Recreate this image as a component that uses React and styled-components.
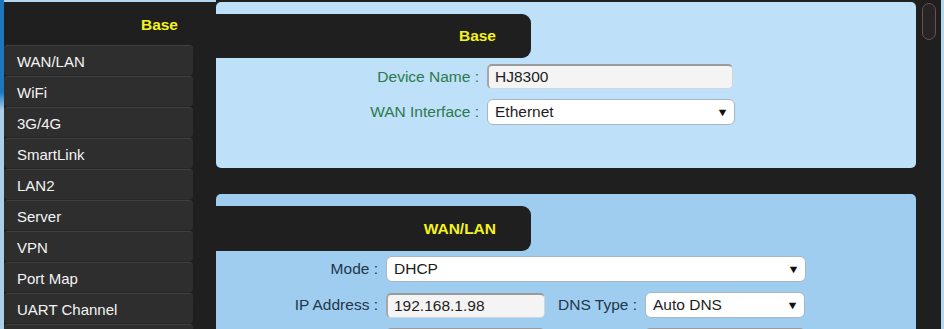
import React from "react";
import styled, { createGlobalStyle } from "styled-components";

const Global = createGlobalStyle`
  html, body { margin: 0; padding: 0; background: #1f1f1f; overflow: hidden; }
  body { font-family: "Liberation Sans", Arial, sans-serif; font-size: 15px; }
  * { box-sizing: border-box; }
`;

const Shell = styled.div`
  display: flex;
  width: 944px;
  height: 329px;
  background: #1f1f1f;
  overflow: hidden;
`;

const Edge = styled.div`
  width: 4px;
  flex: none;
  background: linear-gradient(#1b77bf 0, #1b77bf 92px, #a9cfe9 110px, #a9cfe9 100%);
`;

const Sidebar = styled.nav`
  width: 189px;
  flex: none;
  border-top: 2px solid #b3d5ed;
  display: flex;
  flex-direction: column;
`;

const SideHead = styled.div`
  height: 43px;
  flex: none;
  padding: 14px 15px 0 0;
  text-align: right;
  color: #f4f41c;
  font-weight: bold;
  font-size: 15.5px;
`;

const MenuItem = styled.div`
  height: 31px;
  flex: none;
  display: flex;
  align-items: center;
  padding: 2px 0 0 13px;
  color: #f4f4f4;
  font-size: 15px;
  background: #2e2e2e;
  border-top: 1px solid #3f3f3f;
  border-bottom: 1px solid #272727;
  border-radius: 4px;
`;

const Gutter = styled.div`
  width: 23px;
  flex: none;
  border-top: 2px solid #b3d5ed;
`;

const Main = styled.main`
  width: 700px;
  flex: none;
  padding-top: 2px;
  display: flex;
  flex-direction: column;
  gap: 26px;
`;

const Panel = styled.section`
  background: ${(p) => p.$bg};
  border-radius: 5px;
  padding: 12px 0 0 0;
  height: ${(p) => p.$h || "auto"};
  flex: none;
`;

const PanelHead = styled.div`
  width: 315px;
  height: ${(p) => p.$h}px;
  background: #1f1f1f;
  border-radius: 0 9px 9px 0;
  color: #f4f41c;
  font-weight: bold;
  font-size: 15.5px;
  display: flex;
  align-items: center;
  justify-content: flex-end;
  padding-right: 35px;
`;

const Form = styled.div`
  display: grid;
  grid-template-columns: ${(p) => p.$cols};
  column-gap: 8px;
  row-gap: 10px;
  margin-top: ${(p) => p.$mt}px;
  align-items: center;
`;

const Label = styled.label`
  text-align: right;
  color: ${(p) => p.$color};
  font-size: 15.5px;
  white-space: nowrap;
`;

const TextInput = styled.input`
  width: ${(p) => p.$w}px;
  height: 25px;
  font-family: "Liberation Sans", Arial, sans-serif;
  font-size: 15.5px;
  color: #1d1d1d;
  background: ${(p) => (p.disabled ? "#b4b4b4" : "#f4f4f4")};
  border: 1px solid #cfd6dc;
  border-top: 2px solid #9b9b9b;
  border-left: 2px solid #a6a6a6;
  border-radius: 5px;
  padding: 0 0 0 6px;
  outline: none;
`;

const SelectBox = styled.div`
  width: ${(p) => p.$w}px;
  height: 26px;
  grid-column: ${(p) => p.$span || "auto"};
  background: #ffffff;
  border: 1px solid #a9b6c2;
  border-radius: 6px;
  display: flex;
  align-items: center;
  justify-content: space-between;
  padding: 0 6px 0 7px;
  color: #1d1d1d;
  font-size: 15.5px;
`;

const Arrow = styled.span`
  font-size: 11px;
  color: #111;
  transform: scaleX(1.15);
`;

const ScrollTrack = styled.div`
  width: 23px;
  flex: none;
  margin-left: 2px;
  background: #1f1f1f;
  padding: 3px 5px 0 4px;
`;

const Thumb = styled.div`
  height: 37px;
  border: 1.5px solid #6e4e4e;
  border-radius: 7px;
  background: #262424;
`;

const RightEdge = styled.div`
  width: 3px;
  flex: none;
  background: #b2d6ef;
`;

const Select = ({ value, w, span }) => (
  <SelectBox $w={w} $span={span}>
    <span>{value}</span>
    <Arrow>▼</Arrow>
  </SelectBox>
);

const menu = ["WAN/LAN", "WiFi", "3G/4G", "SmartLink", "LAN2", "Server", "VPN", "Port Map", "UART Channel", ""];

export default function App() {
  return (
    <>
      <Global />
      <Shell>
        <Edge />
        <Sidebar>
          <SideHead>Base</SideHead>
          {menu.map((m, i) => (
            <MenuItem key={i}>{m}</MenuItem>
          ))}
        </Sidebar>
        <Gutter />
        <Main>
          <Panel $bg="#bee0f8" $h="166px">
            <PanelHead $h={44}>Base</PanelHead>
            <Form $cols="263px 248px" $mt={6}>
              <Label $color="#2c7a4c">Device Name :</Label>
              <TextInput $w={246} defaultValue="HJ8300" />
              <Label $color="#2c7a4c">WAN Interface :</Label>
              <Select value="Ethernet" w={248} />
            </Form>
          </Panel>
          <Panel $bg="#9ecdf0">
            <PanelHead $h={45}>WAN/LAN</PanelHead>
            <Form $cols="162px 159px 84px 160px" $mt={5}>
              <Label $color="#23364a">Mode :</Label>
              <Select value="DHCP" w={420} span="2 / 5" />
              <Label $color="#23364a">IP Address :</Label>
              <TextInput $w={159} defaultValue="192.168.1.98" />
              <Label $color="#23364a">DNS Type :</Label>
              <Select value="Auto DNS" w={160} />
              <Label $color="#23364a" />
              <TextInput $w={159} disabled defaultValue="" />
              <Label $color="#23364a" />
              <TextInput $w={160} disabled defaultValue="" />
            </Form>
          </Panel>
        </Main>
        <ScrollTrack>
          <Thumb />
        </ScrollTrack>
        <RightEdge />
      </Shell>
    </>
  );
}
